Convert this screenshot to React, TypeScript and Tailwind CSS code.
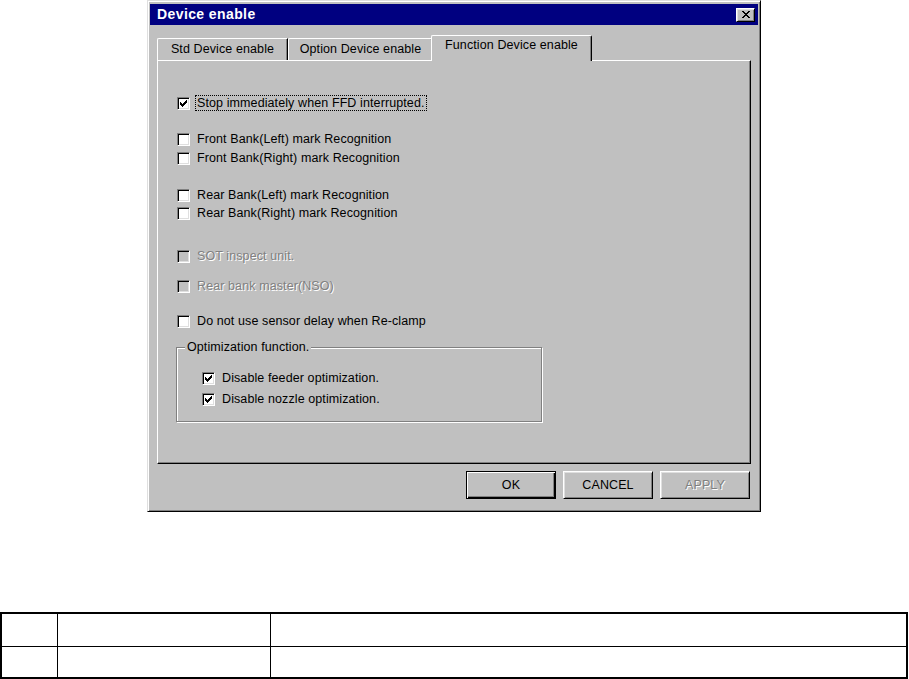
import React from 'react';

const raised =
  'border border-t-white border-l-white border-r-black border-b-black shadow-[inset_1px_1px_#dfdfdf,inset_-1px_-1px_#808080]';

function CheckMark() {
  return (
    <svg width="7" height="7" viewBox="0 0 7 7" shapeRendering="crispEdges">
      <path
        fill="#000"
        d="M6 0h1v1h-1z M5 1h2v1h-2z M0 2h1v1h-1z M4 2h3v1h-3z M0 3h2v1h-2z M3 3h3v1h-3z M0 4h5v1h-5z M1 5h3v1h-3z M2 6h1v1h-1z"
      />
    </svg>
  );
}

function CloseGlyph() {
  return (
    <svg width="8" height="7" viewBox="0 0 8 7" shapeRendering="crispEdges">
      <path
        fill="#000"
        d="M0 0h2v1h-2z M6 0h2v1h-2z M1 1h2v1h-2z M5 1h2v1h-2z M2 2h4v1h-4z M3 3h2v1h-2z M2 4h4v1h-4z M1 5h2v1h-2z M5 5h2v1h-2z M0 6h2v1h-2z M6 6h2v1h-2z"
      />
    </svg>
  );
}

function CheckRow({
  label,
  checked = false,
  disabled = false,
  focused = false,
  className = '',
}: {
  label: string;
  checked?: boolean;
  disabled?: boolean;
  focused?: boolean;
  className?: string;
}) {
  return (
    <div className={`flex items-center h-[18px] ${className}`}>
      <span
        className={`w-[13px] h-[13px] shrink-0 flex items-center justify-center border border-t-[#808080] border-l-[#808080] border-r-white border-b-white shadow-[inset_1px_1px_#000,inset_-1px_-1px_#dfdfdf] ${
          disabled ? 'bg-[#c0c0c0]' : 'bg-white'
        }`}
      >
        {checked && <CheckMark />}
      </span>
      {focused ? (
        <span className="ml-[5px] px-[1px] border border-dotted border-black leading-[14px]">{label}</span>
      ) : (
        <span
          className={`ml-[7px] ${disabled ? 'text-[#808080] [text-shadow:1px_1px_0_#ffffff]' : ''}`}
        >
          {label}
        </span>
      )}
    </div>
  );
}

function Button({ label, isDefault = false, disabled = false }: { label: string; isDefault?: boolean; disabled?: boolean }) {
  return (
    <div
      className={`w-[90px] h-[28px] flex items-center justify-center ${
        isDefault
          ? 'border border-black shadow-[inset_1px_1px_#fff,inset_-1px_-1px_#000,inset_-2px_-2px_#808080]'
          : raised
      } ${disabled ? 'text-[#808080] [text-shadow:1px_1px_0_#ffffff]' : ''}`}
    >
      {label}
    </div>
  );
}

export default function App() {
  return (
    <div className="w-[909px] h-[679px] bg-white overflow-hidden font-['Liberation_Sans',Arial,sans-serif] text-[12.5px] tracking-[0.1px] leading-[15px] text-black">
      <div className="ml-[147px] w-[614px] h-[512px] bg-[#c0c0c0] border border-t-[#dfdfdf] border-l-[#dfdfdf] border-r-black border-b-black shadow-[inset_1px_1px_#fff,inset_-1px_-1px_#808080] p-[2px] flex flex-col">
        {/* title bar */}
        <div className="mt-[1px] h-[21px] bg-[#000080] flex items-center justify-between pl-[7px] pr-[3px]">
          <span className="text-white font-bold text-[14px] tracking-[0.4px]">Device enable</span>
          <div className={`w-[19px] h-[14px] bg-[#c0c0c0] flex items-center justify-center ${raised}`}>
            <CloseGlyph />
          </div>
        </div>

        {/* tabs */}
        <div className="mt-[10px] mx-[7px] h-[25px] flex items-end">
          <div className="w-[131px] h-[22px] flex justify-center pt-[3px] border-t border-l border-white border-r border-r-black shadow-[inset_-1px_0_#808080] rounded-tl-[2px]">
            Std Device enable
          </div>
          <div className="w-[145px] h-[22px] flex justify-center pt-[3px] border-t border-l border-white border-r border-r-black shadow-[inset_-1px_0_#808080] rounded-t-[2px]">
            Option Device enable
          </div>
          <div className="relative z-10 -ml-[2px] -mb-[1px] w-[161px] h-[26px] bg-[#c0c0c0] flex justify-center pt-[2px] border-t border-l border-white border-r border-r-black shadow-[inset_-1px_0_#808080] rounded-t-[2px]">
            Function Device enable
          </div>
        </div>

        {/* panel */}
        <div className="mx-[7px] h-[404px] border border-t-white border-l-white border-r-black border-b-black shadow-[inset_-1px_-1px_#808080] pl-[19px] flex flex-col">
          <CheckRow className="mt-[33px]" label="Stop immediately when FFD interrupted." checked focused />
          <CheckRow className="mt-[18px]" label="Front Bank(Left) mark Recognition" />
          <CheckRow className="mt-[1px]" label="Front Bank(Right) mark Recognition" />
          <CheckRow className="mt-[19px]" label="Rear Bank(Left) mark Recognition" />
          <CheckRow label="Rear Bank(Right) mark Recognition" />
          <CheckRow className="mt-[25px]" label="SOT inspect unit." disabled />
          <CheckRow className="mt-[12px]" label="Rear bank master(NSO)" disabled />
          <CheckRow className="mt-[17px]" label="Do not use sensor delay when Re-clamp" />

          <div className="relative mt-[17px] -ml-[1px] w-[366px] h-[75px] border border-[#808080] shadow-[inset_1px_1px_#fff,1px_1px_#fff] pl-[25px] pt-[21px]">
            <span className="absolute -top-[8px] left-[8px] px-[2px] bg-[#c0c0c0]">Optimization function.</span>
            <CheckRow label="Disable feeder optimization." checked />
            <CheckRow className="mt-[3px]" label="Disable nozzle optimization." checked />
          </div>
        </div>

        {/* buttons */}
        <div className="mt-[7px] pr-[8px] flex justify-end gap-[7px]">
          <Button label="OK" isDefault />
          <Button label="CANCEL" />
          <Button label="APPLY" disabled />
        </div>
      </div>

      {/* table */}
      <div className="mt-[100px] w-[908px] border-2 border-black flex flex-col">
        <div className="h-[33px] flex border-b border-black">
          <div className="w-[56px] border-r border-black" />
          <div className="w-[213px] border-r border-black" />
          <div className="flex-1" />
        </div>
        <div className="h-[30px] flex">
          <div className="w-[56px] border-r border-black" />
          <div className="w-[213px] border-r border-black" />
          <div className="flex-1" />
        </div>
      </div>
    </div>
  );
}
